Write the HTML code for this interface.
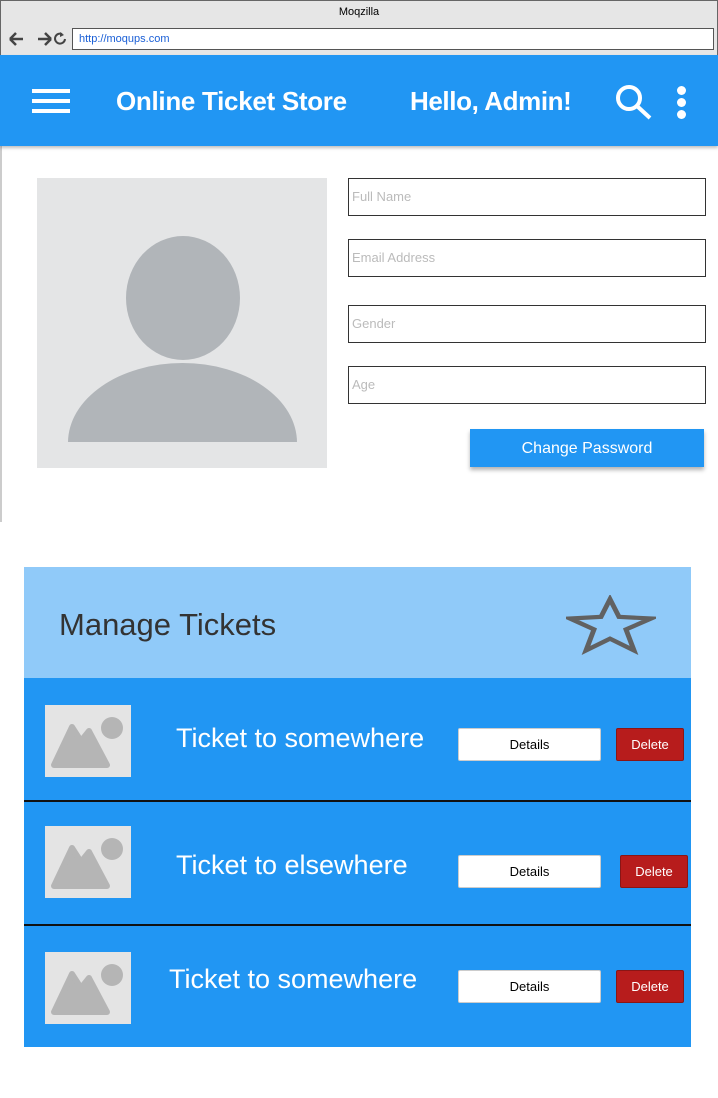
<!DOCTYPE html><html><head><style>
*{margin:0;padding:0;box-sizing:border-box}
body{width:718px;height:1098px;background:#fff;position:relative;font-family:"Liberation Sans",sans-serif;overflow:hidden}
.a{position:absolute}
.inp{position:absolute;left:348px;width:358px;height:38px;border:1px solid #333;background:#fff;color:#bbb;font-size:13px;padding:10px 3px}
.row{position:absolute;left:24px;width:667px;background:#2196f3}
.th{position:absolute;left:21px;width:86px;height:72px;background:#e4e4e4}
.tt{position:absolute;color:#fff;font-size:27px}
.det{position:absolute;left:434px;width:143px;height:33px;background:#fff;border:1px solid #ccc;border-radius:2px;font-size:13px;text-align:center;line-height:31px}
.del{position:absolute;width:68px;height:33px;background:#b71c1c;border:1px solid #8a1515;border-radius:2px;color:#fff;font-size:13px;text-align:center;line-height:31px}
</style></head><body>
<div class="a" style="left:0;top:0;width:718px;height:56px;background:#e6e6e6;border:1px solid #666;border-bottom:none"></div>
<div class="a" style="left:0;top:6px;width:718px;text-align:center;font-size:11px">Moqzilla</div>
<svg class="a" style="left:8px;top:30px" width="60" height="18"><path d="M2 9 H15 M2 9 L8 3 M2 9 L8 15" stroke="#444" stroke-width="2.5" fill="none"/><path d="M30 9 H43 M43 9 L37 3 M43 9 L37 15" stroke="#444" stroke-width="2.5" fill="none"/><path d="M60 9 A5 5 0 1 1 57 4" stroke="#444" stroke-width="2" fill="none" transform="translate(-3,0)"/><path d="M52 2 L56 5 L52 7 Z" fill="#444"/></svg>
<div class="a" style="left:72px;top:28px;width:642px;height:22px;background:#fff;border:1px solid #555;font-size:11px;color:#1a5fd6;padding:4px 6px">http://moqups.com</div>
<div class="a" style="left:0;top:146px;width:2px;height:376px;background:#ccc"></div>
<div class="a" style="left:0;top:55px;width:718px;height:91px;background:#2196f3;box-shadow:0 2px 3px rgba(0,0,0,.25)"></div>
<div class="a" style="left:32px;top:89px;width:38px;height:4px;background:#fff"></div>
<div class="a" style="left:32px;top:99px;width:38px;height:4px;background:#fff"></div>
<div class="a" style="left:32px;top:109px;width:38px;height:4px;background:#fff"></div>
<div class="a" style="left:116px;top:86px;color:#fff;font-size:26px;font-weight:bold;letter-spacing:-0.3px">Online Ticket Store</div>
<div class="a" style="left:410px;top:86px;color:#fff;font-size:26px;font-weight:bold;letter-spacing:-0.4px">Hello, Admin!</div>
<svg class="a" style="left:614px;top:83px" width="40" height="38"><circle cx="15" cy="15" r="11" fill="none" stroke="#fff" stroke-width="4"/><line x1="23" y1="23" x2="36" y2="35" stroke="#fff" stroke-width="4"/></svg>
<div class="a" style="left:677px;top:86px;width:9px;height:9px;border-radius:50%;background:#fff"></div>
<div class="a" style="left:677px;top:98px;width:9px;height:9px;border-radius:50%;background:#fff"></div>
<div class="a" style="left:677px;top:110px;width:9px;height:9px;border-radius:50%;background:#fff"></div>
<div class="a" style="left:37px;top:178px;width:290px;height:290px;background:#e4e5e6;overflow:hidden">
<div class="a" style="left:89px;top:58px;width:114px;height:124px;border-radius:50%;background:#b1b5b9"></div>
<div class="a" style="left:31px;top:185px;width:229px;height:160px;border-radius:115px 115px 0 0/80px 80px 0 0;background:#b1b5b9"></div>
<div class="a" style="left:0;top:264px;width:290px;height:30px;background:#e4e5e6"></div>
</div>
<div class="inp" style="top:178px">Full Name</div>
<div class="inp" style="top:239px">Email Address</div>
<div class="inp" style="top:305px">Gender</div>
<div class="inp" style="top:366px">Age</div>
<div class="a" style="left:470px;top:429px;width:234px;height:38px;background:#2196f3;color:#fff;font-size:16px;text-align:center;line-height:40px;box-shadow:0 3px 4px rgba(0,0,0,.3)">Change Password</div>
<div class="a" style="left:24px;top:567px;width:667px;height:111px;background:#90caf9"></div>
<div class="a" style="left:59px;top:607px;font-size:31px;color:#333">Manage Tickets</div>
<svg class="a" style="left:566px;top:595px" width="90" height="60"><polygon points="44,5 53,26 85,28 60,41 68,66 44,52 20,66 28,41 4,28 35,26" fill="none" stroke="#616161" stroke-width="5" transform="scale(1,0.84)"/></svg>
<div class="row" style="top:678px;height:123px">
<div class="th" style="top:27px"><svg width="86" height="72"><circle cx="67" cy="23" r="11" fill="#b5b5b5"/><path d="M9 60 L27 22 L36 36 L44 26 L62 60 Z" fill="#b5b5b5" stroke="#b5b5b5" stroke-width="6" stroke-linejoin="round"/></svg></div>
<div class="tt" style="left:152px;top:45px">Ticket to somewhere</div>
<div class="det" style="top:50px">Details</div><div class="del" style="left:592px;top:50px">Delete</div>
</div>
<div class="a" style="left:24px;top:800px;width:667px;height:2px;background:#111"></div>
<div class="row" style="top:802px;height:122px">
<div class="th" style="top:24px"><svg width="86" height="72"><circle cx="67" cy="23" r="11" fill="#b5b5b5"/><path d="M9 60 L27 22 L36 36 L44 26 L62 60 Z" fill="#b5b5b5" stroke="#b5b5b5" stroke-width="6" stroke-linejoin="round"/></svg></div>
<div class="tt" style="left:152px;top:48px">Ticket to elsewhere</div>
<div class="det" style="top:53px">Details</div><div class="del" style="left:596px;top:53px">Delete</div>
</div>
<div class="a" style="left:24px;top:924px;width:667px;height:2px;background:#111"></div>
<div class="row" style="top:926px;height:121px">
<div class="th" style="top:26px"><svg width="86" height="72"><circle cx="67" cy="23" r="11" fill="#b5b5b5"/><path d="M9 60 L27 22 L36 36 L44 26 L62 60 Z" fill="#b5b5b5" stroke="#b5b5b5" stroke-width="6" stroke-linejoin="round"/></svg></div>
<div class="tt" style="left:145px;top:38px">Ticket to somewhere</div>
<div class="det" style="top:44px">Details</div><div class="del" style="left:592px;top:44px">Delete</div>
</div>
</body></html>
